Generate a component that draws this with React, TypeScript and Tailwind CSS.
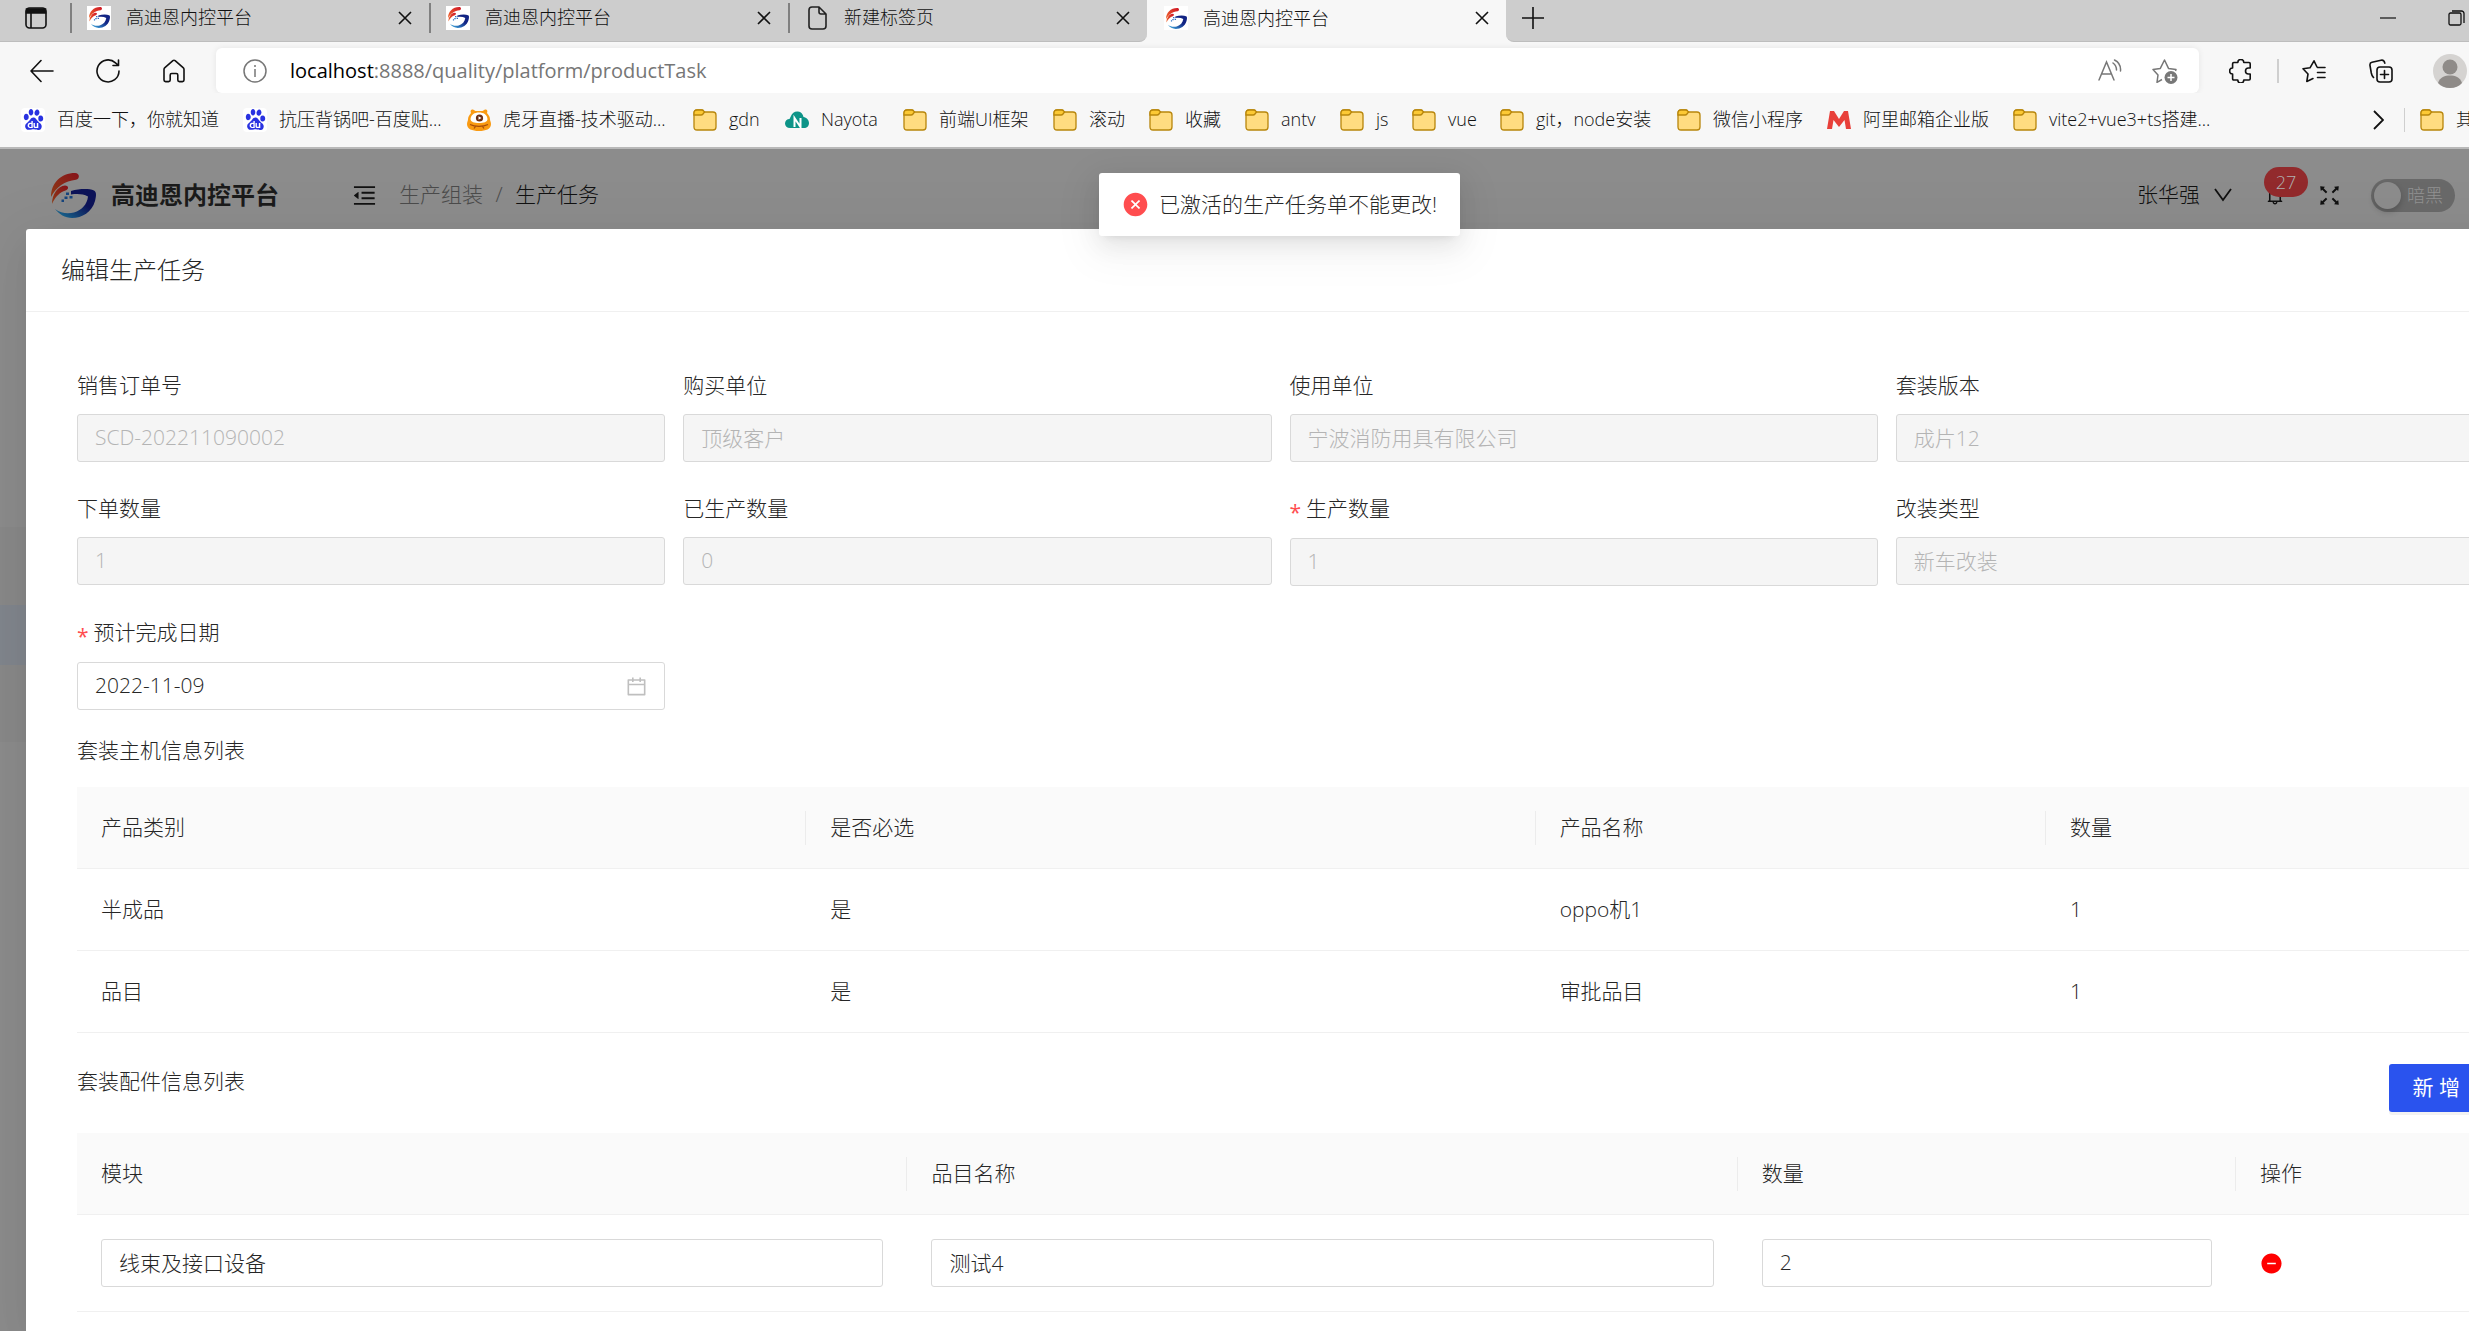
import { useId } from "react";
import type { ReactNode } from "react";
import {
  AiFillCloseCircle,
  AiFillMinusCircle,
  AiOutlineBell,
  AiOutlineCalendar,
  AiOutlineFullscreen,
  AiOutlineMenuFold,
} from "react-icons/ai";
import { SiBaidu } from "react-icons/si";

type Field = {
  label: string;
  value: string;
  required?: boolean;
};

type Bookmark = {
  label: string;
  icon: ReactNode;
  width: string;
};

const fields: Field[] = [
  { label: "销售订单号", value: "SCD-202211090002" },
  { label: "购买单位", value: "顶级客户" },
  { label: "使用单位", value: "宁波消防用具有限公司" },
  { label: "套装版本", value: "成片12" },
  { label: "下单数量", value: "1" },
  { label: "已生产数量", value: "0" },
  { label: "生产数量", value: "1", required: true },
  { label: "改装类型", value: "新车改装" },
];

const hosts = [
  { category: "半成品", required: "是", name: "oppo机1", count: "1" },
  { category: "品目", required: "是", name: "审批品目", count: "1" },
];

const bookmarks: Bookmark[] = [
  { label: "百度一下，你就知道", icon: <BaiduIcon />, width: "w-[222px]" },
  { label: "抗压背锅吧-百度贴...", icon: <BaiduIcon />, width: "w-[224px]" },
  { label: "虎牙直播-技术驱动...", icon: <HuyaIcon />, width: "w-[226px]" },
  { label: "gdn", icon: <FolderIcon />, width: "w-[92px]" },
  { label: "Nayota", icon: <NayotaIcon />, width: "w-[118px]" },
  { label: "前端UI框架", icon: <FolderIcon />, width: "w-[150px]" },
  { label: "滚动", icon: <FolderIcon />, width: "w-[96px]" },
  { label: "收藏", icon: <FolderIcon />, width: "w-[96px]" },
  { label: "antv", icon: <FolderIcon />, width: "w-[95px]" },
  { label: "js", icon: <FolderIcon />, width: "w-[72px]" },
  { label: "vue", icon: <FolderIcon />, width: "w-[88px]" },
  { label: "git，node安装", icon: <FolderIcon />, width: "w-[177px]" },
  { label: "微信小程序", icon: <FolderIcon />, width: "w-[150px]" },
  { label: "阿里邮箱企业版", icon: <MailIcon />, width: "w-[186px]" },
  { label: "vite2+vue3+ts搭建...", icon: <FolderIcon />, width: "w-[226px]" },
];

export default function App() {
  return (
    <div className="relative flex h-screen flex-col overflow-hidden bg-[#8c8c8c] font-['Open_Sans','Noto_Sans_CJK_SC',sans-serif] text-[21px] font-light text-[#262626]">
      <TabBar />
      <Toolbar />
      <BookmarkBar />
      <AppHeader />
      <div className="flex min-h-0 flex-1">
        <Sidebar />
        <TaskModal />
      </div>
      <Toast />
    </div>
  );
}

/* ---------- browser chrome ---------- */

function TabBar() {
  return (
    <div className="flex h-[42px] shrink-0 bg-[#f7f7f7] text-[18px] text-[#111]">
      <div className="flex rounded-br-lg border-b border-[#bdbdbd] bg-[#cdcdcd]">
        <button aria-label="标签页操作" className="flex w-[70px] items-center pb-1.5 pl-[25px]">
          <svg width="22" height="22" viewBox="0 0 22 22" fill="none" stroke="#111" strokeWidth="1.6">
            <rect x="1" y="1" width="20" height="20" rx="3.5" />
            <path d="M1.5 2h19v4h-19z" fill="#111" />
            <path d="M6 6v15" />
          </svg>
        </button>
        <Tab title="高迪恩内控平台" icon={<Favicon />} />
        <Tab title="高迪恩内控平台" icon={<Favicon />} />
        <Tab title="新建标签页" icon={<PageIcon />} />
      </div>
      <Tab title="高迪恩内控平台" icon={<Favicon />} active />
      <div className="flex flex-1 items-center rounded-bl-lg border-b border-[#bdbdbd] bg-[#cdcdcd] pr-1 pb-1.5 pl-4">
        <button aria-label="新建标签页">
          <svg width="22" height="22" viewBox="0 0 22 22" stroke="#111" strokeWidth="1.6">
            <path d="M11 0v22M0 11h22" />
          </svg>
        </button>
        <button aria-label="最小化" className="ml-auto">
          <svg width="16" height="16" viewBox="0 0 16 16" stroke="#111" strokeWidth="1.2">
            <path d="M0 8h16" />
          </svg>
        </button>
        <button aria-label="最大化" className="ml-[52px]">
          <svg width="17" height="16" viewBox="0 0 17 16" fill="none" stroke="#111" strokeWidth="1.3">
            <rect x="1" y="3" width="12" height="12" rx="1.5" />
            <path d="M4 1h9.5a2.5 2.5 0 0 1 2.500 2.500V13" />
          </svg>
        </button>
      </div>
    </div>
  );
}

function Tab({ title, icon, active }: { title: string; icon: ReactNode; active?: boolean }) {
  return (
    <div className="flex w-[359px] items-center pb-1.5">
      <span className={`h-[30px] w-0.5 ${active ? "" : "bg-[#808080]"}`} />
      <span className="ml-[15px] flex w-6 justify-center">{icon}</span>
      <span className="ml-[15px]">{title}</span>
      <button aria-label="关闭标签页" className="mr-[17px] ml-auto">
        <svg width="14" height="14" viewBox="0 0 14 14" stroke="#111" strokeWidth="1.6">
          <path d="M1 1l12 12M13 1L1 13" />
        </svg>
      </button>
    </div>
  );
}

function Toolbar() {
  return (
    <div className="flex shrink-0 items-center bg-[#f7f7f7] pt-1.5 pr-0.5 pl-[30px]">
      <button aria-label="返回">
        <svg width="24" height="24" viewBox="0 0 24 24" fill="none" stroke="#111" strokeWidth="1.6" strokeLinecap="round" strokeLinejoin="round">
          <path d="M23 12H1M11 1.500L1 12l10 10.500" />
        </svg>
      </button>
      <button aria-label="刷新" className="ml-[42px]">
        <svg width="24" height="24" viewBox="0 0 24 24" fill="none" stroke="#111" strokeWidth="1.6" strokeLinecap="round" strokeLinejoin="round">
          <path d="M23 12a11 11 0 1 1-3.500-8.100L22.500 6.500M22.500 1v5.500H17" />
        </svg>
      </button>
      <button aria-label="主页" className="ml-[42px]">
        <svg width="24" height="24" viewBox="0 0 24 24" fill="none" stroke="#111" strokeWidth="1.6" strokeLinejoin="round">
          <path d="M2 10.500c0-.8.300-1.400.9-1.900l8-6.900c.7-.6 1.500-.6 2.200 0l8 6.900c.6.5.9 1.100.9 1.900V21c0 1-.6 1.600-1.600 1.600h-3c-1 0-1.600-.6-1.600-1.600v-5c0-1-.5-1.500-1.500-1.500h-4.600c-1 0-1.500.5-1.500 1.500v5c0 1-.6 1.600-1.600 1.600h-3C2.600 22.600 2 22 2 21z" />
        </svg>
      </button>

      <div className="ml-[30px] flex h-[45px] flex-1 items-center rounded-md bg-white pr-[21px] pl-[27px] shadow-[0_0_6px_rgba(0,0,0,0.08)]">
        <svg width="24" height="24" viewBox="0 0 24 24" fill="none" stroke="#777" strokeWidth="1.5">
          <circle cx="12" cy="12" r="11" />
          <path d="M12 10v8M12 6v2" />
        </svg>
        <span className="ml-[23px] text-[20px] font-normal text-[#767676]">
          <span className="text-black">localhost</span>:8888/quality/platform/productTask
        </span>
        <button aria-label="大声朗读" className="ml-auto">
          <svg width="24" height="24" viewBox="0 0 24 24" fill="none" stroke="#777" strokeWidth="1.5" strokeLinecap="round">
            <path d="M1 21L8.500 3 16 21M4 15h9M15 4c2 1.500 3.500 4 3.500 7M16.500 1c4 2 6.500 6 6 11" />
          </svg>
        </button>
        <button aria-label="添加到收藏夹" className="ml-[30px]">
          <svg width="26" height="26" viewBox="0 0 26 26" fill="none" stroke="#777" strokeWidth="1.5" strokeLinejoin="round">
            <path d="M10 21.500L5 24.300l1-7.300L1 11.600l7.300-1.200L12.500 2l4 8.400 7.500 1.200-.5 1.400" />
            <circle cx="19" cy="19.500" r="6.500" fill="#777" stroke="none" />
            <path d="M19 16v7M15.500 19.500h7" stroke="#fff" />
          </svg>
        </button>
      </div>

      <button aria-label="扩展" className="ml-[30px]">
        <svg width="24" height="24" viewBox="0 0 24 24" fill="none" stroke="#111" strokeWidth="1.6" strokeLinejoin="round">
          <path d="M4.800 3.500h4a3 3 0 0 1 6 0H20c.8 0 1.200.5 1.200 1.200V9h-1.700a3 3 0 0 0 0 6h1.700v4.800c0 .8-.5 1.200-1.200 1.200h-5.200a3 3 0 0 1-6 0h-4c-.8 0-1.200-.5-1.200-1.200V15a3 3 0 0 1 0-6V4.700c0-.7.400-1.200 1.200-1.200z" />
        </svg>
      </button>
      <span className="ml-6 h-6 w-0.5 bg-[#cfcfcf]" />
      <button aria-label="收藏夹" className="ml-[23px]">
        <svg width="24" height="24" viewBox="0 0 24 24" fill="none" stroke="#111" strokeWidth="1.6" strokeLinejoin="round" strokeLinecap="round">
          <path d="M11 19.500L4.800 22.500 6 15 1 9.800l7-1 4-7 3 6.200M15.500 8.500H23M15.500 13.500H23M15.500 18.500H23" />
        </svg>
      </button>
      <button aria-label="集锦" className="ml-[43px]">
        <svg width="24" height="24" viewBox="0 0 24 24" fill="none" stroke="#111" strokeWidth="1.6" strokeLinejoin="round" strokeLinecap="round">
          <rect x="8" y="8" width="15" height="15" rx="3" />
          <path d="M15.500 11.500v8M11.500 15.500h8M4.500 18.500C3 17.500 2.700 16 2.300 14L1 6.500C.7 4.700 1.300 3.700 3 3.300L12 1.200c2-.4 3.300.6 3.800 3" />
        </svg>
      </button>
      <button aria-label="个人资料" className="ml-10">
        <svg width="34" height="34" viewBox="0 0 34 34">
          <circle cx="17" cy="17" r="17" fill="#d5d3d1" />
          <circle cx="17" cy="13" r="7.500" fill="#8f8b88" />
          <path d="M5 29c2-6 7-7.500 12-7.500S27 23 29 29c-3 3.200-7 5-12 5s-9-1.800-12-5z" fill="#8f8b88" />
        </svg>
      </button>
    </div>
  );
}

function BookmarkBar() {
  return (
    <nav className="flex h-14 shrink-0 items-center border-b-2 border-[#b9b9b9] bg-[#f7f7f7] pl-[21px] text-[18px] whitespace-nowrap text-[#111]">
      {bookmarks.map((item, idx) => (
        <a key={idx} href="#" className={`flex shrink-0 items-center gap-3 pb-px ${item.width}`}>
          <span className="flex w-6 shrink-0 justify-center">{item.icon}</span>
          {item.label}
        </a>
      ))}
      <button aria-label="更多收藏" className="ml-auto">
        <svg width="12" height="20" viewBox="0 0 12 20" fill="none" stroke="#111" strokeWidth="1.8">
          <path d="M2 1l9 9-9 9" />
        </svg>
      </button>
      <span className="ml-5 h-6 w-px bg-[#cfcfcf]" />
      <a href="#" className="ml-[15px] flex w-[49px] items-center gap-3 overflow-hidden pb-px">
        <span className="shrink-0">
          <FolderIcon />
        </span>
        其
      </a>
    </nav>
  );
}

/* ---------- application ---------- */

function AppHeader() {
  return (
    <header className="flex h-20 shrink-0 items-center bg-[#8c8c8c] pt-3 pr-3.5 pl-[51px] text-[#111]">
      <Logo size={45} dim />
      <span className="ml-[15px] text-[24px] font-bold text-[#1b1b1b]">高迪恩内控平台</span>
      <button aria-label="收起菜单" className="ml-[72px]">
        <AiOutlineMenuFold size={27} />
      </button>
      <nav className="ml-[21px] flex">
        <a href="#" className="text-[#4b4b4b]">
          生产组装
        </a>
        <span className="w-8 text-center text-[#4b4b4b]">/</span>
        <span>生产任务</span>
      </nav>
      <button className="ml-auto flex items-center gap-3.5">
        张华强
        <svg width="18" height="14" viewBox="0 0 18 14" fill="none" stroke="currentColor" strokeWidth="1.8">
          <path d="M1 1l8 11 8-11" />
        </svg>
      </button>
      <button aria-label="通知" className="relative ml-8">
        <AiOutlineBell size={22} />
        <span className="absolute -top-[17px] left-0 flex h-[30px] w-11 items-center justify-center rounded-full bg-[#922a2c] text-[18px] text-[#b0b0b0]">
          27
        </span>
      </button>
      <button aria-label="全屏" className="ml-[30px]">
        <AiOutlineFullscreen size={27} />
      </button>
      <button
        role="switch"
        aria-checked="false"
        className="ml-7 flex h-[33px] w-[84px] items-center gap-1.5 rounded-full bg-[#696969] pl-[3px] text-[18px] text-[#929292]"
      >
        <span className="size-[27px] rounded-full bg-[#8c8c8c] shadow-[0_3px_6px_rgba(0,0,0,0.2)]" />
        暗黑
      </button>
    </header>
  );
}

function Sidebar() {
  return (
    <aside className="flex w-[26px] shrink-0 flex-col bg-[#8c8c8c]">
      <div className="h-[298px]" />
      <div className="h-[78px] bg-[#898989]" />
      <div className="h-[60px] bg-[#81868d]" />
      <div className="h-[77px] bg-[#898989]" />
    </aside>
  );
}

function TaskModal() {
  const dateId = useId();

  return (
    <main className="relative -mr-[66px] flex-1 rounded-t-[3px] bg-white shadow-[0_9px_24px_-12px_rgba(0,0,0,0.08),0_14px_42px_rgba(0,0,0,0.05),0_18px_72px_24px_rgba(0,0,0,0.03)]">
      <h1 className="flex h-[83px] items-center border-b border-[#f0f0f0] pl-[35px] text-[24px]">编辑生产任务</h1>
      <div className="px-[51px] pt-[57px]">
        <form className="grid grid-cols-4 gap-x-[18px] gap-y-[30px]">
          {fields.map((field) => (
            <FormField key={field.label} {...field} />
          ))}
          <div>
            <FieldLabel id={dateId} required>
              预计完成日期
            </FieldLabel>
            <div className="flex h-12 items-center rounded-[3px] border border-[#d9d9d9] pr-4 pl-[17px]">
              <input id={dateId} defaultValue="2022-11-09" className="min-w-0 flex-1 outline-none" />
              <AiOutlineCalendar size={23} className="text-[#bfbfbf]" />
            </div>
          </div>
        </form>

        <h2 className="mt-6 mb-5 leading-[33px]">套装主机信息列表</h2>
        <table className="w-full table-fixed border-separate border-spacing-0 text-left">
          <thead>
            <tr>
              <HeadCell width="w-[30.3%]">产品类别</HeadCell>
              <HeadCell width="w-[30.3%]">是否必选</HeadCell>
              <HeadCell width="w-[21.2%]">产品名称</HeadCell>
              <HeadCell width="w-[18.2%]" last>
                数量
              </HeadCell>
            </tr>
          </thead>
          <tbody>
            {hosts.map((row) => (
              <tr key={row.category}>
                <BodyCell>{row.category}</BodyCell>
                <BodyCell>{row.required}</BodyCell>
                <BodyCell>{row.name}</BodyCell>
                <BodyCell>{row.count}</BodyCell>
              </tr>
            ))}
          </tbody>
        </table>

        <div className="mt-[31px] mb-[21px] flex items-start justify-between">
          <h2 className="leading-[35px]">套装配件信息列表</h2>
          <button className="h-12 rounded-[3px] bg-[#2a53ee] px-6 font-normal text-white shadow-[0_3px_0_rgba(0,0,0,0.05)]">
            新 增
          </button>
        </div>
        <table className="w-full table-fixed border-separate border-spacing-0 text-left">
          <thead>
            <tr>
              <HeadCell width="w-[34.5%]">模块</HeadCell>
              <HeadCell width="w-[34.5%]">品目名称</HeadCell>
              <HeadCell width="w-[20.7%]">数量</HeadCell>
              <HeadCell width="w-[10.3%]" last>
                操作
              </HeadCell>
            </tr>
          </thead>
          <tbody>
            <tr>
              <BodyCell>
                <CellInput label="模块" value="线束及接口设备" />
              </BodyCell>
              <BodyCell>
                <CellInput label="品目名称" value="测试4" />
              </BodyCell>
              <BodyCell>
                <CellInput label="数量" value="2" />
              </BodyCell>
              <BodyCell>
                <button aria-label="删除" className="flex">
                  <AiFillMinusCircle size={23} color="#f00" />
                </button>
              </BodyCell>
            </tr>
          </tbody>
        </table>
      </div>
    </main>
  );
}

function FieldLabel({ id, required, children }: { id: string; required?: boolean; children: ReactNode }) {
  return (
    <label htmlFor={id} className={`mb-3 flex items-center ${required ? "h-[34px]" : "h-[33px]"}`}>
      {required && <span className="mr-[5px] pt-1.5 font-normal leading-none text-[#ff4d4f]">*</span>}
      {children}
    </label>
  );
}

function FormField({ label, value, required }: Field) {
  const id = useId();

  return (
    <div>
      <FieldLabel id={id} required={required}>
        {label}
      </FieldLabel>
      <input
        id={id}
        disabled
        value={value}
        className="h-12 w-full rounded-[3px] border border-[#d9d9d9] bg-[#f5f5f5] px-[17px] pb-0.5 text-[#b4b4b4]"
      />
    </div>
  );
}

function HeadCell({ width, last, children }: { width: string; last?: boolean; children: ReactNode }) {
  return (
    <th className={`h-[82px] border-b border-[#f0f0f0] bg-[#fafafa] pl-6 font-light ${width}`}>
      <div className="flex items-center justify-between">
        {children}
        {!last && <span className="h-[34px] w-px bg-[#ececec]" />}
      </div>
    </th>
  );
}

function BodyCell({ children }: { children: ReactNode }) {
  return <td className="h-[82px] border-b border-[#f0f0f0] px-6 py-[21px]">{children}</td>;
}

function CellInput({ label, value }: { label: string; value: string }) {
  return (
    <input
      aria-label={label}
      defaultValue={value}
      className="my-[3px] block h-12 w-full rounded-[3px] border border-[#d9d9d9] px-[17px] pb-0.5"
    />
  );
}

function Toast() {
  return (
    <div
      role="alert"
      className="absolute top-[173px] left-[1099px] flex h-[63px] items-center gap-2.5 rounded-[3px] bg-white px-[23px] whitespace-nowrap shadow-[0_5px_9px_-6px_rgba(0,0,0,0.12),0_9px_24px_rgba(0,0,0,0.08),0_12px_42px_12px_rgba(0,0,0,0.04)]"
    >
      <AiFillCloseCircle size={27} color="#ff4d4f" />
      已激活的生产任务单不能更改!
    </div>
  );
}

/* ---------- icons ---------- */

function Logo({ size, dim }: { size: number; dim?: boolean }) {
  const id = useId();

  return (
    <svg width={size} height={size} viewBox="0 0 45 45" className="shrink-0">
      <defs>
        <linearGradient id={`${id}r`} x1="1" y1="0" x2="0" y2="1">
          <stop offset="0" stopColor={dim ? "#86121a" : "#cf1626"} />
          <stop offset="1" stopColor={dim ? "#8f3d17" : "#f0682c"} />
        </linearGradient>
        <linearGradient id={`${id}b`} x1="1" y1="0" x2="0" y2="1">
          <stop offset="0.4" stopColor={dim ? "#0d1358" : "#122484"} />
          <stop offset="1" stopColor={dim ? "#1c7799" : "#41b6e6"} />
        </linearGradient>
      </defs>
      <path d="M0 24C0 10 10 0 24 0c5 0 5 6 1 6.800C14 8 5 14 0 24z" fill={`url(#${id}r)`} />
      <path d="M1 31C1 21 7 13 14 12.500c4 0 4 4 0.500 5C9 19 4 24 1 31z" fill={`url(#${id}r)`} />
      <path
        d="M20 18c9-2.500 18-2.500 23-0.500 3 1.500 2 6 1 10.500C41 39 31 45 21 45 14 45 8 41 4 36c6 4.500 13 5 19 3.500 8-2.500 13-8 14-16C32 21 27 20.500 20 21.500z"
        fill={`url(#${id}b)`}
      />
      <path
        d="M15 19.500h3v2.500h-3zM18.500 23h3v2.500h-3zM13.500 23.500h3V26h-3zM10.500 26.500h2.500V29h-2.500z"
        fill={dim ? "#17457d" : "#2b6fc0"}
      />
    </svg>
  );
}

function Favicon() {
  return (
    <span className="flex size-6 items-center justify-center bg-white">
      <Logo size={21} />
    </span>
  );
}

function PageIcon() {
  return (
    <svg width="19" height="24" viewBox="0 0 19 24" fill="none" stroke="#222" strokeWidth="1.6" strokeLinejoin="round">
      <path d="M4 1h7l7 7v12c0 2-1 3-3 3H4c-2 0-3-1-3-3V4c0-2 1-3 3-3zM11 1v5c0 1.300.7 2 2 2h5" />
    </svg>
  );
}

function FolderIcon() {
  return (
    <svg width="24" height="22" viewBox="0 0 24 22" stroke="#b8860b" strokeWidth="1.3">
      <path d="M1 4c0-2 1-3 3-3h4.500c1 0 1.700.4 2.300 1.200L11.500 3H20c2 0 3 1 3 3v12c0 2-1 3-3 3H4c-2 0-3-1-3-3z" fill="#ffdc80" />
      <path d="M1 6V4c0-2 1-3 3-3h4.500c1 0 1.700.4 2.300 1.200L11.500 3 10 5c-.5.700-1 1-2 1z" fill="#fcc934" />
    </svg>
  );
}

function BaiduIcon() {
  return (
    <span className="flex size-6 items-center justify-center rounded-sm bg-white">
      <SiBaidu size={21} color="#2932e1" />
    </span>
  );
}

function HuyaIcon() {
  return (
    <svg width="24" height="22" viewBox="0 0 24 22">
      <path d="M4 4C3 2 4 0 6 .5L8.500 2h7L18 .5c2-.5 3 1.500 2 3.500 2 2.500 3 4 3 6.500 0 1.500 1 2.500 1 4.500 0 5-5 7-12 7S0 20 0 15c0-2 1-3 1-4.500C1 8 2 6.500 4 4z" fill="#f99a12" />
      <path d="M3.500 10C4 5.500 7.500 3.500 12 3.500s8 2 8.500 6.500c0 3-4 4-8.500 4s-8.500-1-8.500-4z" fill="#fff" />
      <circle cx="12.500" cy="9" r="3.600" fill="#6b2d12" />
      <path d="M11.500 7.300v3.400l3-1.700z" fill="#fff" />
      <path d="M3 15.500c5 2.500 13 2.500 18 0M7 19.500l1.500-2M17 19.500l-1.500-2" fill="none" stroke="#a64b0a" strokeWidth="1.2" />
    </svg>
  );
}

function NayotaIcon() {
  return (
    <svg width="24" height="18" viewBox="0 0 24 18">
      <path d="M5 17C2 17 0 15 0 12.500 0 10 2 8 4.500 8L6 5c1-3 4-5 7-4.500 3 .3 5 2.500 5.500 5.500 3 .5 5.500 3 5.500 6 0 3-2 5-5 5z" fill="#0d9488" />
      <path d="M9.500 16V7l6 9V7" fill="none" stroke="#fff" strokeWidth="2" />
    </svg>
  );
}

function MailIcon() {
  return (
    <svg width="24" height="18" viewBox="0 0 24 18">
      <path d="M0 18L3 0h4l5 8 5-8h4l3 18h-5l-1.500-9L12 16 6.500 9 5 18z" fill="#e8403a" />
    </svg>
  );
}
